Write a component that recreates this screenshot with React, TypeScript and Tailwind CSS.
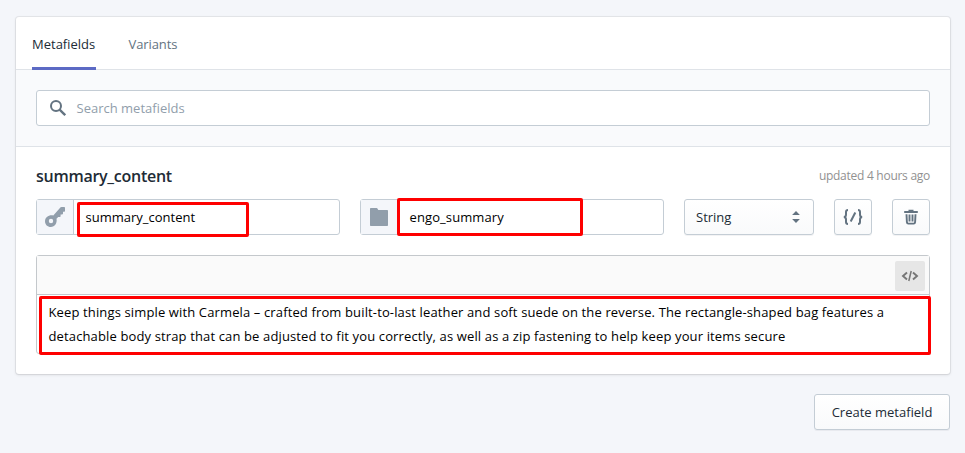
import React from "react";

function SearchIcon() {
  return (
    <svg width="16" height="16" viewBox="0 0 16 16" fill="none" stroke="#637381">
      <circle cx="6" cy="6" r="5" strokeWidth="2" />
      <path d="M9.6 9.6L15.2 15.2" strokeWidth="2.3" />
    </svg>
  );
}

function KeyIcon() {
  return (
    <svg width="20" height="20" viewBox="0 0 20 20" fill="#919eab">
      <path
        fillRule="evenodd"
        d="M15.6 .3Q16 0 16.6 0H19.2Q20 0 20 .8V4Q20 4.8 19.2 4.8H18V6.6Q18 7.4 17.2 7.4H15.6V9.2Q15.6 10 14.8 10H13.2L11.5 11.7C12.4 16 9.8 20 5.8 20C2.5 20 0 17.5 0 14.2C0 10.2 4 7.6 8.3 8.5ZM6 11.8A2.2 2.2 0 1 0 6 16.2A2.2 2.2 0 1 0 6 11.8Z"
      />
    </svg>
  );
}

function FolderIcon() {
  return (
    <svg width="18" height="18" viewBox="0 0 18 18" fill="#919eab">
      <path d="M1 0H6.6C7.2 0 7.4 .3 7.7 .9L8.3 2H17C17.6 2 18 2.4 18 3V17C18 17.6 17.6 18 17 18H1C.4 18 0 17.6 0 17V1C0 .4 .4 0 1 0Z" />
    </svg>
  );
}

function SelectArrows() {
  return (
    <svg width="8" height="12" viewBox="0 0 8 12" fill="#637381">
      <path d="M4 0L7.9 4H.1ZM4 12L7.900 8H.1Z" />
    </svg>
  );
}

function BracesIcon() {
  return (
    <svg width="20" height="16" viewBox="0 0 20 16" fill="none" stroke="#637381" strokeWidth="2">
      <path d="M5 1C3.2 1 3 1.7 3 3V5.5C3 7 2.6 8 .8 8C2.6 8 3 9 3 10.5V13C3 14.3 3.2 15 5 15" />
      <path d="M15 1C16.8 1 17 1.7 17 3V5.5C17 7 17.4 8 19.2 8C17.4 8 17 9 17 10.5V13C17 14.3 16.8 15 15 15" />
      <path d="M12.3 3.5L7.7 12.5" />
    </svg>
  );
}

function TrashIcon() {
  return (
    <svg width="14" height="16" viewBox="0 0 14 16" fill="none" stroke="#637381" strokeWidth="1.9">
      <path d="M.2 3H13.8M4.5 1.6H9.5" />
      <path d="M2.5 5.3L2.9 13.2C3 14.2 3.400 14.600 4.300 14.600H9.700C10.600 14.600 11 14.200 11.100 13.200L11.500 5.300M5.500 5.500V12.500M8.500 5.500V12.500" />
    </svg>
  );
}

function CodeIcon() {
  return (
    <svg width="18" height="12" viewBox="0 0 18 12" fill="none" stroke="#757575" strokeWidth="1.9">
      <path d="M6 2.5L2 6L6 9.5M12 2.5L16 6L12 9.5" />
      <path d="M10.2 1L7.8 11" strokeWidth="1.5" />
    </svg>
  );
}

const button =
  "flex h-9 items-center justify-center rounded-[3px] border border-[#c4cdd5] bg-gradient-to-b from-white to-[#f9fafb] shadow-[0_1px_0_rgba(22,29,37,0.05)]";

export default function App() {
  return (
    <main className="h-[453px] w-[965px] overflow-hidden bg-[#f4f6fa] pt-[17px] pr-[15px] pl-4 font-['Open_Sans','Noto_Sans',sans-serif] text-[13px] whitespace-nowrap text-[#212b36]">
      <section className="h-[357px] rounded-[3px] bg-white shadow-[0_0_0_1px_rgba(63,63,68,0.08),0_1px_3px_rgba(63,63,68,0.15)]">
        <nav className="flex h-[53px] gap-8 border-b border-[#dfe3e8] px-4">
          <button className="-mb-px h-[53px] w-16 border-b-[3px] border-[#5c6ac4] pt-[5px] text-left">
            <span>Metafields</span>
          </button>
          <button className="h-[53px] pt-0.5 pl-[0.5px] text-left tracking-[-0.1px] text-[#637381]">
            <span>Variants</span>
          </button>
        </nav>

        <div className="h-[77px] border-b border-[#dfe3e8] bg-[#f9fafc] px-5 pt-5">
          <label className="flex h-9 items-center gap-[10.5px] rounded-[3px] border border-[#c4cdd5] bg-white pl-[13px] text-[#919eab]">
            <SearchIcon />
            <span className="pt-0.5">Search metafields</span>
          </label>
        </div>

        <div className="px-5">
          <header className="flex h-[52px] items-center justify-between pt-1.5">
            <h2 className="text-[16px] font-semibold tracking-[-0.27px]">summary_content</h2>
            <span className="text-[12px] tracking-[-0.27px] text-[#919191]">updated 4 hours ago</span>
          </header>

          <div className="flex gap-5">
            <div className="relative flex h-9 w-[304px] rounded-[3px] border border-[#c4cdd5] bg-white text-black">
              <div className="flex w-[37px] items-center justify-center border-r border-[#c4cdd5] bg-[#f4f6fa]">
                <KeyIcon />
              </div>
              <span className="self-center pt-0.5 pl-[11.5px]">summary_content</span>
              <div className="absolute top-[2px] left-[40px] h-[35px] w-[172px] rounded-[2px] border-3 border-[#fe0000]" />
            </div>

            <div className="relative flex h-9 w-[304px] rounded-[3px] border border-[#c4cdd5] bg-white text-black">
              <div className="flex w-[37px] items-center justify-center border-r border-[#c4cdd5] bg-[#f4f6fa]">
                <FolderIcon />
              </div>
              <span className="self-center pt-0.5 pl-[11.5px] tracking-[0.1px]">engo_summary</span>
              <div className="absolute -top-[2px] left-[36px] h-[38px] w-[186px] rounded-[2px] border-3 border-[#fe0000]" />
            </div>

            <div className={`${button} w-[130px]`}>
              <span className="flex-1 pt-0.5 pl-[11px]">String</span>
              <span className="pr-[13px]">
                <SelectArrows />
              </span>
            </div>
            <button className={`${button} w-[38px]`}>
              <BracesIcon />
            </button>
            <button className={`${button} w-[38px]`}>
              <TrashIcon />
            </button>
          </div>

          <div className="relative mt-5 h-[99px] rounded-[3px] border border-[#c4c8cc] bg-white">
            <div className="flex h-[39px] items-center justify-end border-b border-[#c4c8cc] bg-[#fafafa] pr-1">
              <button className="mt-[2px] flex size-[30px] items-center justify-center rounded-[2px] bg-[#e6e6e6]">
                <CodeIcon />
              </button>
            </div>
            <div className="pt-[5px] pl-[11.5px] leading-6 text-black">
              <p className="tracking-[0.133px]">
                Keep things simple with Carmela – crafted from built-to-last leather and soft suede on the reverse. The rectangle-shaped bag features a
              </p>
              <p className="tracking-[0.133px]">
                detachable body strap that can be adjusted to fit you correctly, as well as a zip fastening to help keep your items secure
              </p>
            </div>
            <div className="absolute top-[40px] left-[2px] h-[59px] w-[892px] rounded-[2px] border-3 border-[#fe0000]" />
          </div>
        </div>
      </section>

      <div className="mt-5 flex justify-end">
        <button className={`${button} w-[136px]`}>
          <span className="pt-0.5">Create metafield</span>
        </button>
      </div>
    </main>
  );
}
